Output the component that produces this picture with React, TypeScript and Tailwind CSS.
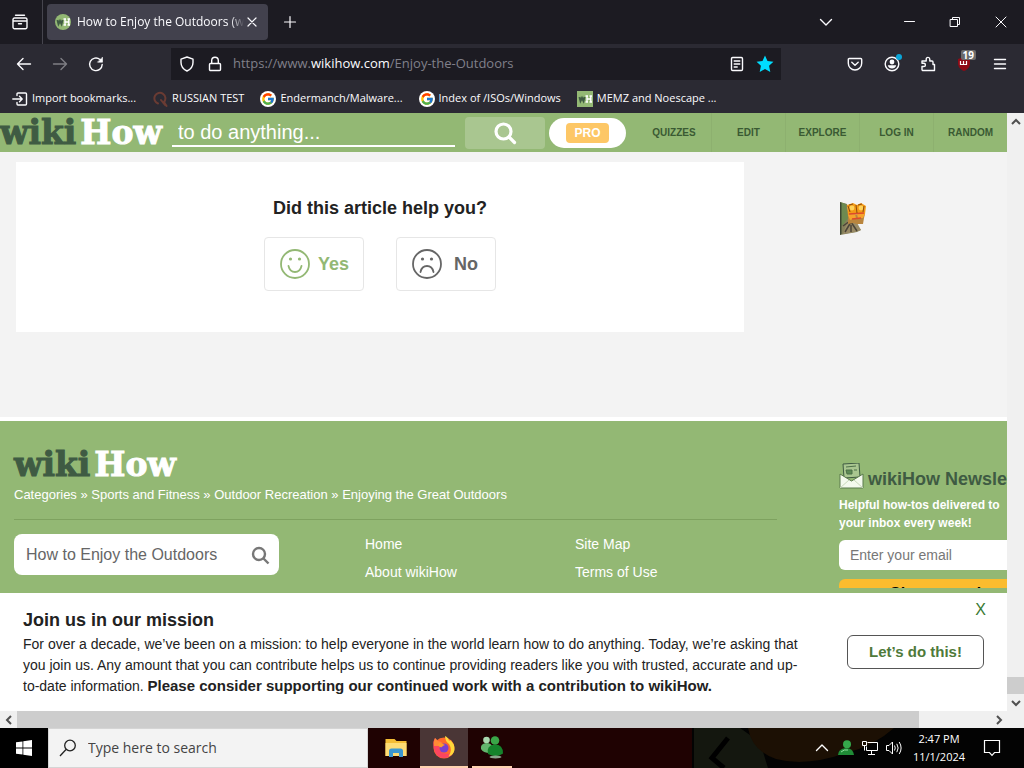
import React from "react";
import { FcGoogle } from "react-icons/fc";

const UI = "font-['Open_Sans','Noto_Sans',sans-serif]";

function Logo({ className = "" }: { className?: string }) {
  return (
    <a
      href="#home"
      className={`flex shrink-0 gap-1 whitespace-nowrap font-['DejaVu_Serif',serif] text-[33px] leading-8 font-bold ${className}`}
    >
      <span className="text-[#3f5b43] [-webkit-text-stroke:1px_#3f5b43]">wiki</span>
      <span className="text-white [-webkit-text-stroke:1px_white]">How</span>
    </a>
  );
}

function WikiFavicon({ round = false }: { round?: boolean }) {
  return (
    <svg viewBox="0 0 16 16" className="size-4 shrink-0" aria-hidden="true">
      <rect width="16" height="16" rx={round ? 8 : 0} fill="#93b874" />
      <path d="M2.500 6l1 4 1.500-3 1.500 3 1-4" fill="none" stroke="#3f5b43" strokeWidth="2" />
      <path d="M8.500 5h2.500M8.500 11h2.500M12.500 5h2.500M12.500 11h2.500M10 5v6M13.800 5v6M10 8h4" fill="none" stroke="#fff" strokeWidth="1.400" />
    </svg>
  );
}

function IconButton({ label, className = "", children }: { label: string; className?: string; children: React.ReactNode }) {
  return (
    <button type="button" aria-label={label} className={`relative flex h-8 shrink-0 items-center justify-center text-[#fbfbfe] ${className}`}>
      {children}
    </button>
  );
}

function Icon({ children, className = "size-4" }: { children: React.ReactNode; className?: string }) {
  return (
    <svg viewBox="0 0 16 16" fill="none" stroke="currentColor" strokeWidth="1.4" strokeLinecap="round" strokeLinejoin="round" className={className} aria-hidden="true">
      {children}
    </svg>
  );
}

function TabBar() {
  return (
    <div className="flex h-11 shrink-0 items-center bg-[#1c1b22]">
      <IconButton label="Recent browsing" className="w-10">
        <Icon>
          <path d="M3.500 1.200h9M2.500 4h11a1.500 1.500 0 0 1 1.500 1.500v7.700a1.500 1.500 0 0 1-1.500 1.500h-11A1.500 1.500 0 0 1 1 13.200V5.500A1.500 1.500 0 0 1 2.500 4zM1 7h14M6.500 9.700h3" />
        </Icon>
      </IconButton>
      <div className="ml-0.5 h-full w-px bg-[#46454e]" />
      <div className="ml-1 flex h-9 w-[221px] items-center rounded bg-[#42414d] pr-2 pl-2 text-[#fbfbfe]">
        <WikiFavicon round />
        <span className="ml-1.5 min-w-0 flex-1 overflow-hidden text-xs whitespace-nowrap [mask-image:linear-gradient(to_right,black_92%,transparent)]">
          How to Enjoy the Outdoors (wikiHow)
        </span>
        <button type="button" aria-label="Close tab" className="flex size-4 items-center justify-center">
          <Icon><path d="M4 4l8 8M12 4l-8 8" strokeWidth="1.200" /></Icon>
        </button>
      </div>
      <IconButton label="New tab" className="ml-1.5 w-8">
        <Icon><path d="M8 2.500v11M2.500 8h11" strokeWidth="1.200" /></Icon>
      </IconButton>
      <div className="flex-1" />
      <IconButton label="List all tabs" className="mr-11 w-8">
        <Icon><path d="M2.500 5.500L8 11l5.500-5.500" /></Icon>
      </IconButton>
      <IconButton label="Minimize" className="w-[46px]">
        <Icon><path d="M3.500 7.500h10" strokeWidth="1" /></Icon>
      </IconButton>
      <IconButton label="Restore" className="w-[46px]">
        <Icon><path d="M3.500 5.500h7v7h-7zM5.500 5.500v-2h7v7h-2" strokeWidth="1" /></Icon>
      </IconButton>
      <IconButton label="Close" className="w-[46px]">
        <Icon><path d="M3 3l10 10M13 3L3 13" strokeWidth="1" /></Icon>
      </IconButton>
    </div>
  );
}

function NavBar() {
  return (
    <div className="flex h-10 shrink-0 items-center bg-[#2b2a33] pl-1.5">
      <IconButton label="Back" className="w-9">
        <Icon><path d="M7 2.500L1.500 8 7 13.500M1.500 8h13" /></Icon>
      </IconButton>
      <IconButton label="Forward" className="w-9 opacity-40">
        <Icon><path d="M9 2.500L14.500 8 9 13.500M14.500 8h-13" /></Icon>
      </IconButton>
      <IconButton label="Reload" className="w-9">
        <Icon>
          <path d="M14.200 8.500A6.300 6.300 0 1 1 12 3.500l1.500 1.500" />
          <path d="M14.500 1.500v4.700H9.800z" fill="currentColor" strokeWidth="0.600" />
        </Icon>
      </IconButton>
      <div className="ml-[57px] flex h-8 min-w-0 flex-1 items-center bg-[#1c1b22] text-[#fbfbfe]">
        <IconButton label="Tracking protection" className="w-8">
          <Icon><path d="M8 1l6 2.200v3.300c0 4-2.300 6.800-6 8.500-3.700-1.700-6-4.500-6-8.500V3.200z" /></Icon>
        </IconButton>
        <IconButton label="Connection secure" className="w-6">
          <Icon><path d="M3.500 7.500h9a1 1 0 0 1 1 1v5a1 1 0 0 1-1 1h-9a1 1 0 0 1-1-1v-5a1 1 0 0 1 1-1zM4.700 7.300V4.500a3.300 3.300 0 0 1 6.600 0v2.800" /></Icon>
        </IconButton>
        <div className="ml-1.5 min-w-0 flex-1 truncate text-[13px] text-[#80808a]">
          https://www.<span className="text-[#fbfbfe]">wikihow.com</span>/Enjoy-the-Outdoors
        </div>
        <IconButton label="Reader view" className="w-7">
          <Icon><rect x="2.500" y="1.500" width="11" height="13" rx="1.200" /><path d="M5.200 5h5.600M5.200 8h5.600M5.200 11h3" /></Icon>
        </IconButton>
        <IconButton label="Edit bookmark" className="mr-0.5 w-7">
          <svg viewBox="0 0 16 16" className="size-[18px]" fill="#00ddff" aria-hidden="true">
            <path d="M8 0.500l2.200 4.900 5.300.6-3.900 3.600 1.100 5.500L8 12.400l-4.700 2.700 1.100-5.500L.5 6l5.300-.6z" />
          </svg>
        </IconButton>
      </div>
      <IconButton label="Save to Pocket" className="ml-14 w-9">
        <Icon><path d="M2.300 2.500h11.400c.6 0 1 .4 1 1v3.800a6.700 6.700 0 0 1-13.400 0V3.500c0-.6.4-1 1-1zM4.800 6.300L8 9.300l3.200-3" /></Icon>
      </IconButton>
      <IconButton label="Account" className="w-[37px]">
        <Icon>
          <circle cx="8" cy="8" r="6.800" />
          <circle cx="8" cy="6" r="2.400" fill="currentColor" stroke="none" />
          <path d="M3.800 9.200h8.400c-.5 2.200-2.100 3.300-4.200 3.300S4.300 11.400 3.800 9.200z" fill="currentColor" stroke="none" />
        </Icon>
        <span className="absolute top-1.5 right-2 size-1.5 rounded-full bg-[#0aa5d8]" />
      </IconButton>
      <IconButton label="Extensions" className="w-9">
        <Icon><path d="M2 10.500h1.800a1.600 1.600 0 0 0 0-3.200H2V5h4.200V3.200a1.800 1.800 0 0 1 3.600 0V5H12a1 1 0 0 1 1 1v2.500h1.500v6H3a1 1 0 0 1-1-1z" /></Icon>
      </IconButton>
      <IconButton label="uBlock Origin" className="w-9">
        <svg viewBox="0 0 16 16" className="size-4" aria-hidden="true">
          <path d="M8 1l6 2v4c0 4-2.400 6.500-6 8-3.600-1.500-6-4-6-8V3z" fill="#8f0b16" />
          <path d="M4.500 5v3.500h6V5M7.500 5v3.500" fill="none" stroke="#fff" strokeWidth="1.200" />
        </svg>
        <span className="absolute top-0.5 right-1.5 rounded-xs bg-[#6a6a6a] px-0.5 text-[10px] leading-[10px] font-bold text-white">19</span>
      </IconButton>
      <IconButton label="Open menu" className="mr-1.5 w-9">
        <Icon><path d="M2.500 3.500h11M2.500 8h11M2.500 12.500h11" /></Icon>
      </IconButton>
    </div>
  );
}

function Bookmark({ icon, children }: { icon: React.ReactNode; children: React.ReactNode }) {
  return (
    <a href="#bookmark" className="flex shrink-0 items-center gap-1 whitespace-nowrap">
      {icon}
      {children}
    </a>
  );
}

function BookmarksBar() {
  const google = (
    <span className="flex size-4 items-center justify-center rounded-full bg-white">
      <FcGoogle className="size-3.5" />
    </span>
  );
  return (
    <nav aria-label="Bookmarks" className="flex h-[29px] shrink-0 items-center gap-4 overflow-hidden bg-[#2b2a33] pl-3 text-[11px] text-[#fbfbfe]">
      <Bookmark icon={<Icon><path d="M5 4.500V3a1 1 0 0 1 1-1h7.500a1 1 0 0 1 1 1v10a1 1 0 0 1-1 1H6a1 1 0 0 1-1-1v-1.500M.8 8H10M7.500 5.300L10.200 8l-2.700 2.700" /></Icon>}>
        Import bookmarks...
      </Bookmark>
      <Bookmark icon={<Icon className="size-4 text-[#6a3b33]"><path d="M6 12.500A5.500 5.500 0 1 1 12 11l2.500 4M9 9l4 5" strokeWidth="2" /></Icon>}>
        RUSSIAN TEST
      </Bookmark>
      <Bookmark icon={google}>Endermanch/Malware...</Bookmark>
      <Bookmark icon={google}>Index of /ISOs/Windows</Bookmark>
      <Bookmark icon={<WikiFavicon />}>MEMZ and Noescape ...</Bookmark>
    </nav>
  );
}

function SiteHeader() {
  return (
    <header className="flex h-[39px] shrink-0 items-center bg-[#93b874]">
      <Logo className="w-[172px]" />
      <input
        aria-label="Search wikiHow"
        placeholder="to do anything..."
        className="h-7 min-w-0 flex-1 border-b-2 border-white bg-transparent px-1.5 text-xl text-white outline-none placeholder:text-white"
      />
      <button type="button" aria-label="Search" className="ml-2.5 flex h-8 w-20 shrink-0 items-center justify-center rounded-sm bg-[#a9c690] text-white">
        <svg viewBox="0 0 24 24" className="size-6" fill="none" stroke="currentColor" strokeWidth="3.200" strokeLinecap="round" aria-hidden="true">
          <circle cx="10.500" cy="10.500" r="7.500" />
          <path d="M16 16l5.500 5.500" />
        </svg>
      </button>
      <a href="#pro" className="ml-1 flex h-[30px] w-[77px] shrink-0 items-center justify-center rounded-full bg-white">
        <span className="rounded bg-[#fdc766] px-2 text-xs leading-5 font-bold text-white">PRO</span>
      </a>
      <nav aria-label="Main" className="ml-[11px] grid h-full w-[370px] shrink-0 grid-cols-5 text-[10px] font-bold text-[#3a5a33]">
        {["QUIZZES", "EDIT", "EXPLORE", "LOG IN", "RANDOM"].map((item) => (
          <a key={item} href="#nav" className="flex items-center justify-center border-l border-[#8db06f] first:border-0">
            {item}
          </a>
        ))}
      </nav>
    </header>
  );
}

function Face({ happy }: { happy: boolean }) {
  return (
    <svg viewBox="0 0 32 32" className="size-8" fill="none" stroke="currentColor" strokeWidth="1.800" strokeLinecap="round" aria-hidden="true">
      <circle cx="16" cy="16" r="14" />
      <circle cx="11.500" cy="11" r="1.600" fill="currentColor" stroke="none" />
      <circle cx="20.500" cy="11" r="1.600" fill="currentColor" stroke="none" />
      {happy ? <path d="M9.500 18c.8 3.500 3.300 6 6.500 6s5.700-2.500 6.500-6" /> : <path d="M9.500 24c.8-3.800 3.300-6 6.500-6s5.700 2.200 6.500 6" />}
    </svg>
  );
}

function Mascot() {
  return (
    <svg viewBox="0 0 28 34" className="mt-[39px] ml-[95px] h-[34px] w-7 shrink-0" aria-hidden="true">
      <path d="M1 1l7 2 2 14 12 12-4 2-17 3z" fill="#85805a" />
      <path d="M1 1l6 2 2 14-5 7-3 1z" fill="#6d8a50" />
      <path d="M1 1l1.500 1v31L1 34z" fill="#3c4632" />
      <path d="M9 19l8 1 5 9-6 2-12 2z" fill="#9a8b66" />
      <path d="M6 31l6-10 6 9M4 25l7-5M12 24v7" fill="none" stroke="#4b4438" strokeWidth="1.500" />
      <path d="M8 4l6-2 4 2 4-2 5 3-1 8-17 1z" fill="#f39a16" />
      <path d="M9 14l17-1-1 4-1 6-6 0-4-1-5 1z" fill="#b9853e" />
      <path d="M9 14l7-1 1 4-6 2zM18 13l8 0-2 4-5 0z" fill="#f7a32b" />
      <circle cx="13" cy="7" r="2.400" fill="#ffd35a" />
      <circle cx="22" cy="7" r="2.400" fill="#ffd35a" />
      <path d="M10 13l15-1M13 18l9-1" stroke="#dd4a2c" strokeWidth="1.600" />
      <path d="M9 5l2 6M17 4l1 8M25 5l-1 6M10 4l4-1M19 4l4-1" fill="none" stroke="#8a4b10" strokeWidth="1" />
    </svg>
  );
}

function Article() {
  return (
    <main className="flex min-h-0 flex-1 items-start border-b-4 border-white bg-[#f3f3f3] pt-2.5 pl-4">
      <section className="flex h-[170px] w-[728px] flex-col items-center bg-white pt-8">
        <h2 className="text-lg leading-7 font-bold text-[#222]">Did this article help you?</h2>
        <div className="mt-[15px] flex gap-8 text-lg font-bold">
          <button type="button" className="flex h-[54px] w-[100px] items-center gap-[7px] rounded-sm border border-[#e6e6e6] pl-3.5 text-[#93b874]">
            <Face happy />
            Yes
          </button>
          <button type="button" className="flex h-[54px] w-[100px] items-center gap-[11px] rounded-sm border border-[#e6e6e6] pl-3.5 text-[#666]">
            <Face happy={false} />
            No
          </button>
        </div>
      </section>
      <Mascot />
    </main>
  );
}

function Footer() {
  return (
    <footer className="flex h-[172px] shrink-0 gap-[62px] overflow-hidden bg-[#93b874] pl-3.5 text-white">
      <div className="flex min-w-0 flex-1 flex-col pt-7">
        <Logo />
        <nav aria-label="Breadcrumb" className="mt-1 truncate text-[13px] leading-5">
          <a href="#c">Categories</a> » <a href="#s">Sports and Fitness</a> » <a href="#o">Outdoor Recreation</a> »{" "}
          <a href="#e">Enjoying the Great Outdoors</a>
        </nav>
        <hr className="mt-3.5 border-[#7ea25f]" />
        <div className="mt-3.5 flex">
          <form className="flex h-[41px] w-[265px] shrink-0 items-center rounded-lg bg-white pr-2 pl-3">
            <input aria-label="Search articles" defaultValue="How to Enjoy the Outdoors" className="min-w-0 flex-1 bg-transparent text-base text-[#666] outline-none" />
            <button type="button" aria-label="Search" className="text-[#777]">
              <svg viewBox="0 0 22 22" className="size-[22px]" fill="none" stroke="currentColor" strokeWidth="2.400" aria-hidden="true">
                <circle cx="10" cy="10" r="6" />
                <path d="M14.500 14.500l5 5" />
              </svg>
            </button>
          </form>
          <div className="ml-[86px] grid grid-cols-[210px_auto] text-sm leading-7">
            <a href="#home" className="-mt-1 h-8">Home</a>
            <a href="#map" className="-mt-1 h-8">Site Map</a>
            <a href="#about" className="-mt-1">About wikiHow</a>
            <a href="#terms" className="-mt-1">Terms of Use</a>
          </div>
        </div>
      </div>
      <section className="w-[168px] shrink-0 overflow-hidden pt-[42px] whitespace-nowrap">
        <h3 className="flex items-end gap-1 text-lg leading-5 font-bold text-[#3f5b43]">
          <svg viewBox="0 0 25 26" className="h-[26px] w-[25px] shrink-0" aria-hidden="true">
            <path d="M4 1l16-1 1 14-16 1z" fill="#a9c690" stroke="#3f5b43" />
            <path d="M7 4l10-1M7 7h6v4H8zM15 7h3" fill="#5d8a55" stroke="#4d7048" strokeWidth="1" />
            <path d="M1 11l11.500 7L24 11v14H1z" fill="#f4faee" stroke="#5b7a4c" />
            <path d="M1 25l9-8M24 25l-9-8" fill="none" stroke="#c9d9bb" />
          </svg>
          wikiHow Newsletter
        </h3>
        <p className="mt-[7px] text-xs leading-[18px] font-bold">
          Helpful how-tos delivered to
          <br />
          your inbox every week!
        </p>
        <input type="email" aria-label="Email" placeholder="Enter your email" className="mt-2 h-[30px] w-[240px] rounded-md bg-white px-[11px] text-sm text-[#444] outline-none placeholder:text-[#777]" />
        <div className="mt-[9px] h-[9px] overflow-hidden">
          <button type="button" className="flex h-9 w-[240px] items-start rounded-md bg-[#fbbc2e] pt-[5px] pl-[51px] text-base leading-5 font-bold text-black">
            Sign me up!
          </button>
        </div>
      </section>
    </footer>
  );
}

function Banner() {
  return (
    <aside className="flex shrink-0 bg-white pt-[15px] pr-[23px] pb-[14px] pl-[23px] text-[#222]">
      <div className="min-w-0 flex-1 pr-6">
        <h2 className="text-lg leading-6 font-bold">Join us in our mission</h2>
        <p className="mt-0.5 text-sm leading-[21px]">
          For over a decade, we’ve been on a mission: to help everyone in the world learn how to do anything. Today, we’re asking that you join us. Any amount
          that you can contribute helps us to continue providing readers like you with trusted, accurate and up-to-date information.{" "}
          <b className="text-[15px] leading-4">Please consider supporting our continued work with a contribution to wikiHow.</b>
        </p>
      </div>
      <div className="-mt-2 ml-4 flex w-[137px] shrink-0 flex-col items-end">
        <button type="button" aria-label="Close banner" className="-mr-1 px-0.5 text-base leading-5 text-[#3a7a33]">
          X
        </button>
        <button type="button" className="mt-[15px] h-[34px] w-full rounded-md border border-[#555] text-[15px] font-bold text-[#4f7a3a]">
          Let’s do this!
        </button>
      </div>
    </aside>
  );
}

function Arrow({ d }: { d: string }) {
  return (
    <span className="flex size-[17px] shrink-0 items-center justify-center text-[#505050]">
      <svg viewBox="0 0 10 10" className="size-2.5" fill="none" stroke="currentColor" strokeWidth="2" aria-hidden="true">
        <path d={d} />
      </svg>
    </span>
  );
}

function Taskbar() {
  return (
    <div className="relative flex h-10 shrink-0 items-center bg-[#1f0202] text-white">
      <svg viewBox="0 0 332 40" className="absolute top-0 right-0 h-10 w-[332px]" aria-hidden="true">
        <rect width="332" height="40" fill="#030303" />
        <path d="M2 0h46l20 14 8 26H2z" fill="#14170f" />
        <path d="M56 0h146q-20 18-48 25-40 14-70 6-24-8-28-31z" fill="#1c1004" />
        <path d="M36 10L20 30l12 10" fill="none" stroke="#000" strokeWidth="5" />
      </svg>
      <button type="button" aria-label="Start" className="relative flex h-full w-12 shrink-0 items-center justify-center bg-black">
        <svg viewBox="0 0 16 16" className="size-4" fill="#fff" aria-hidden="true">
          <path d="M0 2.300l6.500-.9v6.200H0zM7.300 1.300L16 0v7.600H7.300zM0 8.400h6.500v6.200L0 13.700zM7.300 8.400H16V16l-8.700-1.200z" />
        </svg>
      </button>
      <label className="flex h-full w-80 shrink-0 items-center border border-[#d5d5d5] bg-[#f3f3f3] pl-2.5 text-[#222]">
        <svg viewBox="0 0 18 18" className="size-[18px]" fill="none" stroke="currentColor" strokeWidth="1.300" aria-hidden="true">
          <circle cx="11" cy="6.500" r="5.300" />
          <path d="M7 10.500L1 17" />
        </svg>
        <input aria-label="Search" placeholder="Type here to search" className="ml-[11px] w-60 bg-transparent text-sm outline-none placeholder:text-[#444]" />
      </label>
      <button type="button" aria-label="File Explorer" className="ml-1 flex h-full w-12 shrink-0 items-center justify-center">
        <svg viewBox="0 0 24 24" className="size-6" aria-hidden="true">
          <path d="M1.500 3h9l2 2h10v15h-21z" fill="#f3bd35" />
          <path d="M1.500 7h21v13h-21z" fill="#fddc75" />
          <path d="M5 21v-6q0-2.500 2.500-2.500h9q2.500 0 2.500 2.500v6h-4v-4H9v4z" fill="#3b97cf" />
        </svg>
      </button>
      <button type="button" aria-label="Firefox" className="flex h-full w-12 shrink-0 items-center justify-center border-b-2 border-[#ffd2b0] bg-[#4a3636]">
        <svg viewBox="0 0 24 24" className="size-6" aria-hidden="true">
          <circle cx="12" cy="13" r="10.500" fill="#ff6a2c" />
          <path d="M2 14Q0 8 3 3l3 3 4 1-3 5 3 6 7 1 5-4q-2 8-10 8T2 14z" fill="#fb4560" />
          <path d="M2 11Q1 7 3 3l3 3 4 1-3 4z" fill="#ff8a35" />
          <path d="M13 1q4 2 4 5l1-1q5 4 4.500 10-1 5-6 6.500Q21 15 17 9q-4-3-4-8z" fill="#ffd83a" />
          <circle cx="12" cy="13" r="4.500" fill="#7a3fd0" />
          <path d="M6 9q3-2 5 0l2 1q-3 1-3 2-3 1-4-3z" fill="#ff9a2b" />
        </svg>
      </button>
      <button type="button" aria-label="Messenger" className="mx-1 flex h-full w-10 shrink-0 items-center justify-center border-b-2 border-[#ffd2b0]">
        <svg viewBox="0 0 24 24" className="size-6" aria-hidden="true">
          <circle cx="6.500" cy="5" r="3.300" fill="#a8d8ae" />
          <path d="M1 14q-1-5 5-6 6 0 7 5l-3 5q-7 0-9-4z" fill="#63b56d" />
          <circle cx="15" cy="5.500" r="4.300" fill="#3aa648" />
          <path d="M8 19q-2-9 7-9.500 8 0 8 9-7 5-15 .5z" fill="#15832b" />
          <ellipse cx="15.500" cy="22" rx="6" ry="1.500" fill="#8aa48c" />
        </svg>
      </button>
      <div className="relative ml-auto flex h-full shrink-0 items-center">
        <button type="button" aria-label="Show hidden icons" className="flex w-6 justify-center">
          <Icon><path d="M2.500 10.500L8 5l5.500 5.500" /></Icon>
        </button>
        <button type="button" aria-label="Messenger status" className="flex w-6 justify-center">
          <svg viewBox="0 0 16 16" className="size-4" aria-hidden="true">
            <circle cx="9" cy="4.200" r="4" fill="#35a84b" />
            <path d="M0 15q0-6 8-7 7 0 8 7z" fill="#1f8c37" />
            <path d="M3 12q3-3 7-2" stroke="#8fe0a0" fill="none" />
          </svg>
        </button>
        <button type="button" aria-label="Network" className="flex w-6 justify-center">
          <svg viewBox="0 0 16 16" className="size-4" fill="none" stroke="#fff" aria-hidden="true">
            <path d="M5.500 2.500h10v8h-11v-4M9.500 10.500v4M6 14.500h7M.5 1.500h4v4h-4zM2.500 5.500v5" />
          </svg>
        </button>
        <button type="button" aria-label="Volume" className="flex w-6 justify-center">
          <svg viewBox="0 0 16 16" className="size-4" fill="none" stroke="#fff" aria-hidden="true">
            <path d="M.5 5.500H3L6.500 2v12L3 10.500H.5zM8.500 5.500q1.500 2.500 0 5M10.800 3.800q2.700 4.200 0 8.400M13.200 2q3.800 6 0 12" />
          </svg>
        </button>
        <div className="w-[66px] text-center text-[11px] leading-[18px]">
          <div>2:47 PM</div>
          <div>11/1/2024</div>
        </div>
        <button type="button" aria-label="Notifications" className="mr-3 flex w-10 justify-center">
          <svg viewBox="0 0 18 18" className="size-[18px]" fill="none" stroke="#fff" strokeWidth="1.200" aria-hidden="true">
            <path d="M1.500 1.500h15v12h-5L9 16.300 6.500 13.500h-5z" />
          </svg>
        </button>
      </div>
    </div>
  );
}

export default function App() {
  return (
    <div className="flex h-screen flex-col overflow-hidden">
      <div className={`shrink-0 ${UI}`}>
        <TabBar />
        <NavBar />
        <BookmarksBar />
      </div>
      <div className="flex min-h-0 flex-1">
        <div className="flex min-w-0 flex-1 flex-col font-['Liberation_Sans',Arial,sans-serif]">
          <SiteHeader />
          <Article />
          <Footer />
          <Banner />
        </div>
        <div className="flex w-[17px] shrink-0 flex-col bg-[#f0f0f0]">
          <Arrow d="M1 7l4-4 4 4" />
          <div className="flex-1" />
          <div className="h-[17px] bg-[#cdcdcd]" />
          <Arrow d="M1 3l4 4 4-4" />
        </div>
      </div>
      <div className="flex h-[17px] shrink-0 bg-[#f0f0f0] pr-[17px]">
        <Arrow d="M7 1L3 5l4 4" />
        <div className="flex-[902] bg-[#cdcdcd]" />
        <div className="flex-[71]" />
        <Arrow d="M3 1l4 4-4 4" />
      </div>
      <div className={`shrink-0 ${UI}`}>
        <Taskbar />
      </div>
    </div>
  );
}
